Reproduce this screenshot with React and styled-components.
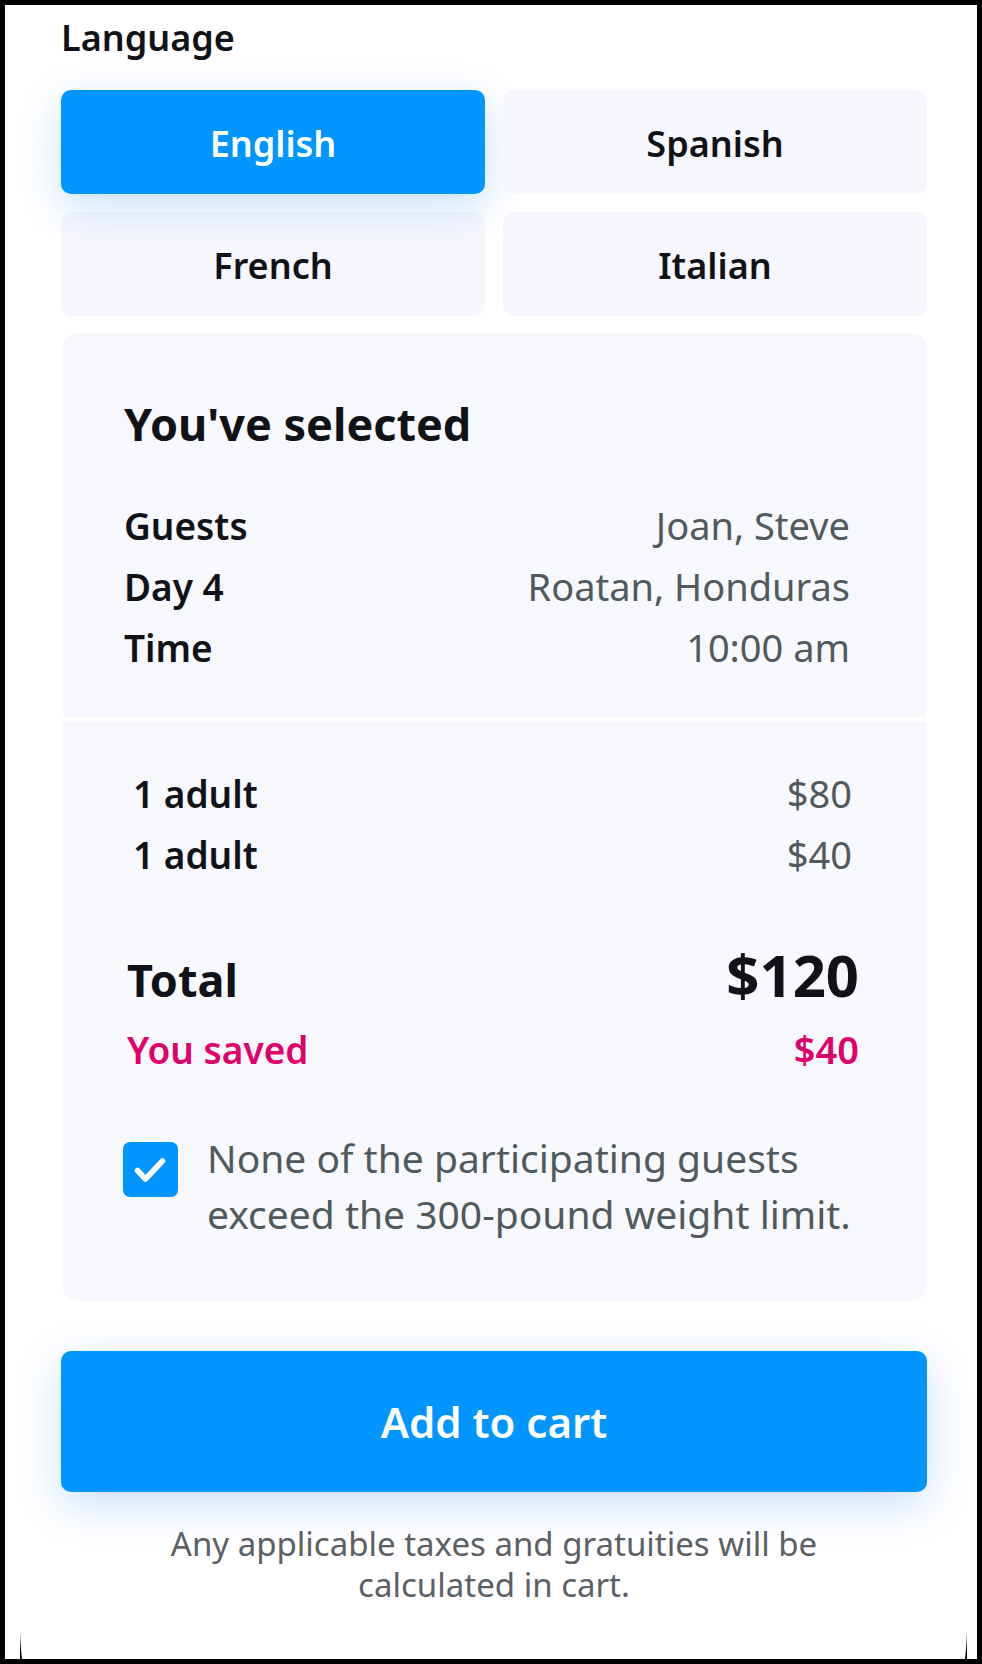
import React, { useState } from "react";
import styled, { createGlobalStyle } from "styled-components";

const GlobalStyle = createGlobalStyle`
  *, *::before, *::after { box-sizing: border-box; }
  body { margin: 0; background: #fff; }
  h1, h2, p, dl, dt, dd { margin: 0; }
  body, button, input { font-family: "Noto Sans", "Open Sans", sans-serif; }
`;

const Page = styled.main`
  position: relative;
  min-height: 100vh;
  display: flex;
  flex-direction: column;
  padding: 10px 50px 40px 56px;
  border: 5px solid #000;
  background: #fff;
  color: #101218;
`;

const GroupTitle = styled.h2`
  margin-bottom: 29px;
  font-size: 36px;
  line-height: 46px;
  font-weight: 600;
`;

const LanguageGrid = styled.div`
  display: grid;
  grid-template-columns: 1fr 1fr;
  gap: 18px;
  margin-bottom: 17px;
`;

const LanguageButton = styled.button`
  position: relative;
  height: 104px;
  padding: 4px 16px 0 16px;
  border: 0;
  border-radius: 10px;
  background: ${(p) => (p.$active ? "#0095ff" : "#f6f7fc")};
  color: ${(p) => (p.$active ? "#fff" : "#101218")};
  box-shadow: ${(p) => (p.$active ? "0 12px 40px rgba(0, 110, 230, 0.22)" : "none")};
  font-size: 36px;
  line-height: 46px;
  font-weight: 600;
  cursor: pointer;

  &[aria-pressed="true"],
  &[aria-pressed="true"] + button {
    z-index: 1;
  }
`;

const Card = styled.section`
  display: flex;
  flex-direction: column;
  gap: 5px;
  margin: 0 1px 50px 2px;
  border-radius: 14px;
  overflow: hidden;
`;

const CardPart = styled.div`
  padding: ${(p) => p.$padding};
  background: #f6f8fc;
`;

const CardTitle = styled.h2`
  margin-bottom: 41px;
  font-size: 45px;
  line-height: 60px;
  font-weight: 700;
`;

const Rows = styled.dl`
  padding: ${(p) => p.$padding || "0"};
`;

const Row = styled.div`
  display: flex;
  justify-content: space-between;
  align-items: baseline;
  font-size: 38px;
  line-height: 61px;
  color: ${(p) => (p.$saved ? "#e0006c" : "inherit")};
`;

const Term = styled.dt`
  font-size: 37px;
  font-weight: 600;
`;

const Value = styled.dd`
  color: ${(p) => (p.$strong ? "inherit" : "#505a5e")};
  font-weight: ${(p) => (p.$strong ? 600 : 400)};
`;

const TotalRow = styled(Row)`
  margin: 55px 0 4px;
  font-size: 45px;
  line-height: 70px;
  font-weight: 700;
`;

const TotalTerm = styled.dt`
  font-weight: 700;
`;

const TotalValue = styled.dd`
  font-size: 58px;
`;

const Consent = styled.label`
  display: flex;
  align-items: flex-start;
  gap: 29px;
  margin-top: 50px;
  font-size: 39px;
  line-height: 56px;
  color: #505a5e;
  cursor: pointer;
`;

const CheckHolder = styled.span`
  display: grid;
  flex: none;
  margin-top: 12px;

  > * {
    grid-area: 1 / 1;
  }
`;

const CheckInput = styled.input`
  appearance: none;
  width: 55px;
  height: 55px;
  margin: 0;
  border-radius: 7px;
  background: #c9d1da;

  &:checked {
    background: #0095ff;
  }
`;

const CheckMark = styled.svg`
  width: 55px;
  height: 55px;
  pointer-events: none;
`;

const CartButton = styled.button`
  height: 141px;
  margin: 0 0 31px;
  padding: 0;
  border: 0;
  border-radius: 10px;
  background: #0095ff;
  box-shadow: 0 12px 44px rgba(0, 110, 230, 0.22);
  color: #fff;
  font-size: 42px;
  line-height: 58px;
  font-weight: 600;
  cursor: pointer;
`;

const Note = styled.p`
  position: relative;
  align-self: center;
  max-width: 720px;
  text-align: center;
  font-size: 33px;
  line-height: 41px;
  color: #5a6064;
`;

const CornerSliver = styled.svg`
  position: absolute;
  bottom: 0;
  width: 3px;
  height: 28px;
  ${(p) => (p.$side === "left" ? "left: 14px;" : "right: 9px; transform: scaleX(-1);")}
`;

const languages = ["English", "Spanish", "French", "Italian"];

const details = [
  ["Guests", "Joan, Steve"],
  ["Day 4", "Roatan, Honduras"],
  ["Time", "10:00 am"],
];

const prices = ["$80", "$40"];

export default function App() {
  const [language, setLanguage] = useState("English");
  const [agreed, setAgreed] = useState(true);

  return (
    <>
      <GlobalStyle />
      <Page>
        <GroupTitle id="language-title">Language</GroupTitle>
        <LanguageGrid role="group" aria-labelledby="language-title">
          {languages.map((name) => (
            <LanguageButton
              key={name}
              type="button"
              $active={name === language}
              aria-pressed={name === language}
              onClick={() => setLanguage(name)}
            >
              {name}
            </LanguageButton>
          ))}
        </LanguageGrid>

        <Card>
          <CardPart $padding="61px 76px 39px 61px">
            <CardTitle>You've selected</CardTitle>
            <Rows>
              {details.map(([term, value]) => (
                <Row key={term}>
                  <Term>{term}</Term>
                  <Value>{value}</Value>
                </Row>
              ))}
            </Rows>
          </CardPart>
          <CardPart $padding="41px 67px 59px 60px">
            <Rows $padding="0 7px 0 10px">
              {prices.map((price) => (
                <Row key={price}>
                  <Term>1 adult</Term>
                  <Value>{price}</Value>
                </Row>
              ))}
            </Rows>
            <Rows $padding="0 0 0 4px">
              <TotalRow>
                <TotalTerm>Total</TotalTerm>
                <TotalValue>$120</TotalValue>
              </TotalRow>
              <Row $saved>
                <Term>You saved</Term>
                <Value $strong>$40</Value>
              </Row>
            </Rows>
            <Consent>
              <CheckHolder>
                <CheckInput
                  type="checkbox"
                  checked={agreed}
                  onChange={(e) => setAgreed(e.target.checked)}
                />
                <CheckMark viewBox="0 0 55 55" aria-hidden="true">
                  <path
                    d="M14.500 28.500L22.500 37L39.500 19"
                    fill="none"
                    stroke="#fff"
                    strokeWidth="5.500"
                    strokeLinecap="round"
                    strokeLinejoin="round"
                  />
                </CheckMark>
              </CheckHolder>
              <span>
                None of the participating guests
                <br />
                exceed the 300-pound weight limit.
              </span>
            </Consent>
          </CardPart>
        </Card>

        <CartButton type="button">Add to cart</CartButton>
        <Note>Any applicable taxes and gratuities will be calculated in cart.</Note>

        <CornerSliver $side="left" viewBox="0 0 3 28" aria-hidden="true">
          <path d="M1 0L1 28L3 28Q1.500 16 1 0Z" fill="#000" />
        </CornerSliver>
        <CornerSliver $side="right" viewBox="0 0 3 28" aria-hidden="true">
          <path d="M1 0L1 28L3 28Q1.500 16 1 0Z" fill="#000" />
        </CornerSliver>
      </Page>
    </>
  );
}
